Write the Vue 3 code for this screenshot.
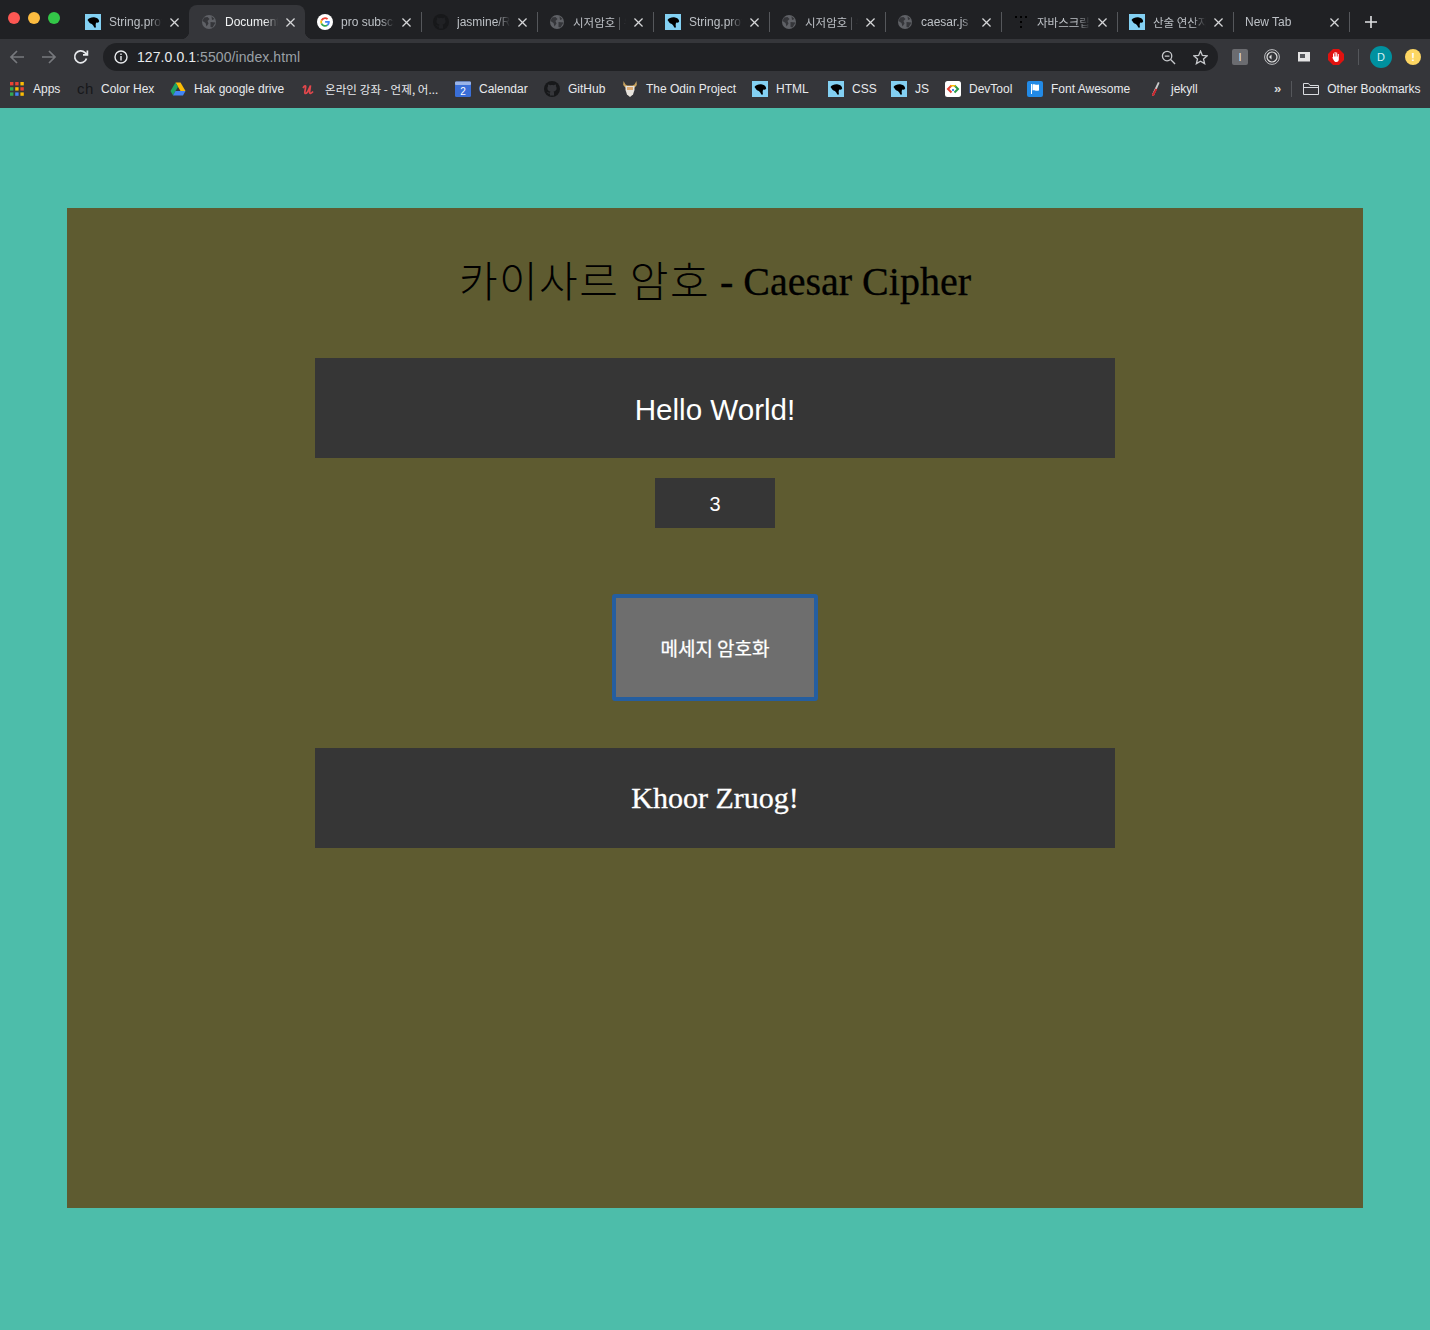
<script setup>
const tabs = [
  { title: 'String.prototype', icon: 'mdn', active: false },
  { title: 'Document', icon: 'globe', active: true },
  { title: 'pro subscription', icon: 'google', active: false },
  { title: 'jasmine/README', icon: 'github', active: false },
  { title: '시저암호 | 위키', icon: 'globe', active: false, ko: true },
  { title: 'String.prototype', icon: 'mdn', active: false },
  { title: '시저암호 | 위키', icon: 'globe', active: false, ko: true },
  { title: 'caesar.js', icon: 'globe', active: false },
  { title: '자바스크립트', icon: 'dots', active: false, ko: true },
  { title: '산술 연산자', icon: 'mdn', active: false, ko: true },
  { title: 'New Tab', icon: '', active: false },
]

const bookmarks = [
  { label: 'Apps', icon: 'apps', width: 68 },
  { label: 'Color Hex', icon: 'ch', width: 93 },
  { label: 'Hak google drive', icon: 'drive', width: 131 },
  { label: '온라인 강좌 - 언제, 어...', icon: 'udemy', width: 154, ko: true },
  { label: 'Calendar', icon: 'calendar', width: 89 },
  { label: 'GitHub', icon: 'github', width: 78 },
  { label: 'The Odin Project', icon: 'odin', width: 130 },
  { label: 'HTML', icon: 'mdn', width: 76 },
  { label: 'CSS', icon: 'mdn', width: 63 },
  { label: 'JS', icon: 'mdn', width: 54 },
  { label: 'DevTool', icon: 'dev', width: 82 },
  { label: 'Font Awesome', icon: 'fa', width: 120 },
  { label: 'jekyll', icon: 'jekyll', width: 90 },
]
</script>

<template>
  <div class="page">
    <svg class="defs" width="0" height="0">
      <symbol id="panther" viewBox="0 0 16 16">
        <rect width="16" height="16" fill="#83d0f2" />
        <path d="M2.5 6C4 4 7 3 10 3.5 12.5 3.8 14 5.5 14.2 7.5L13 8.8 11.5 8.5C10.5 9.5 10.5 11 11 13.5L9.2 13.5C8.5 11.5 7.5 10 5.5 9.5 4.5 9 4 8 3.5 7.2Z" fill="#000" />
      </symbol>
      <symbol id="globe" viewBox="0 0 16 16">
        <circle cx="8" cy="8" r="7" fill="#5f6166" />
        <path d="M3 3.5 6.5 3 8.5 5 6.5 7 7.5 9.5 5.5 12.5 4.5 9 1.5 7ZM10.5 2.2 13.5 5 11 6ZM9.5 8 14.5 8.5 11.5 13.5 9.5 13Z" fill="#35363a" />
      </symbol>
      <symbol id="octo" viewBox="0 0 16 16">
        <circle cx="8" cy="8" r="8" fill="#17181a" />
        <path d="M6 14.5V12.5C4 12.9 3.6 11.6 3.2 11 4.2 11 4.6 12 6 11.7 6 11 6.3 10.6 6.5 10.4 4.8 10.2 3.4 9.4 3.4 7.2 3.4 6.4 3.7 5.8 4.1 5.3 4 5 3.9 4.2 4.2 3.4 5 3.4 5.7 3.9 6.2 4.2 7.3 3.9 8.7 3.9 9.8 4.2 10.3 3.9 11 3.4 11.8 3.4 12.1 4.2 12 5 11.9 5.3 12.3 5.8 12.6 6.4 12.6 7.2 12.6 9.4 11.2 10.2 9.5 10.4 9.8 10.7 10 11.1 10 11.8V14.5Z" fill="currentColor" />
      </symbol>
    </svg>

    <header class="chrome">
      <div class="tabstrip">
        <div class="lights">
          <span class="light red"></span>
          <span class="light yellow"></span>
          <span class="light green"></span>
        </div>
        <div v-for="tab in tabs" :key="tab.title + tab.icon" class="tab" :class="{ active: tab.active }">
          <svg v-if="tab.icon === 'mdn'" class="favicon" viewBox="0 0 16 16"><use href="#panther" /></svg>
          <svg v-else-if="tab.icon === 'globe'" class="favicon" viewBox="0 0 16 16"><use href="#globe" /></svg>
          <svg v-else-if="tab.icon === 'github'" class="favicon" viewBox="0 0 16 16"><use href="#octo" /></svg>
          <svg v-else-if="tab.icon === 'google'" class="favicon" viewBox="0 0 16 16">
            <circle cx="8" cy="8" r="8" fill="#fff" />
            <path d="M8 3.2A4.8 4.8 0 0 1 11.2 4.4L9.9 5.7A3 3 0 0 0 5.2 7L3.7 5.9A4.8 4.8 0 0 1 8 3.2Z" fill="#ea4335" />
            <path d="M3.7 5.9 5.2 7A3 3 0 0 0 5.2 9L3.7 10.1A4.8 4.8 0 0 1 3.7 5.9Z" fill="#fbbc05" />
            <path d="M3.7 10.1 5.2 9A3 3 0 0 0 9.7 10.5L11.1 11.7A4.8 4.8 0 0 1 3.7 10.1Z" fill="#34a853" />
            <path d="M8.1 7.1H12.7C13 9 12.4 10.7 11.1 11.7L9.7 10.5C10.3 10.1 10.7 9.5 10.8 8.8H8.1Z" fill="#4285f4" />
          </svg>
          <svg v-else-if="tab.icon === 'dots'" class="favicon" viewBox="0 0 16 16">
            <g fill="#000"><rect x="2" y="2" width="2" height="2" /><rect x="7" y="2" width="2" height="2" /><rect x="12" y="2" width="2" height="2" /><rect x="7" y="7" width="2" height="2" /><rect x="7" y="12" width="2" height="2" /></g>
          </svg>
          <span class="tab-title" :class="{ ko: tab.ko }">{{ tab.title }}</span>
          <svg class="tab-close" viewBox="0 0 10 10"><path d="M.5 .5 9.5 9.5M9.5 .5 .5 9.5" /></svg>
        </div>
        <svg class="new-tab" viewBox="0 0 12 12"><path d="M6 0V12M0 6H12" /></svg>
      </div>

      <div class="toolbar">
        <svg class="nav dim" viewBox="0 0 16 16"><path d="M15 8H2M8 2 2 8 8 14" /></svg>
        <svg class="nav dim" viewBox="0 0 16 16"><path d="M1 8H14M8 2 14 8 8 14" /></svg>
        <svg class="nav" viewBox="0 0 16 16"><path d="M13.5 9.5A6 6 0 1 1 12 3.6L14 5.6M14.4 1.4V5.8H10" /></svg>
        <div class="omnibox">
          <svg class="info" viewBox="0 0 14 14">
            <circle cx="7" cy="7" r="6" />
            <path d="M7 6V10.5M7 3.4V5" />
          </svg>
          <span class="url"><span class="host">127.0.0.1</span>:5500/index.html</span>
          <svg class="omni-icon zoom" viewBox="0 0 16 16"><circle cx="6.5" cy="6.5" r="5" /><path d="M10.2 10.2 15 15M4 6.5H9" /></svg>
          <svg class="omni-icon" viewBox="0 0 16 16"><path d="M8 1.2 10 5.8 15 6.3 11.2 9.6 12.4 14.6 8 12 3.6 14.6 4.8 9.6 1 6.3 6 5.8Z" /></svg>
        </div>
        <div class="extensions">
          <span class="ext-box">I</span>
          <svg class="ext" viewBox="0 0 16 16"><circle cx="8" cy="8" r="7.4" fill="none" stroke="#bdbec1" /><circle cx="8" cy="8" r="5" fill="none" stroke="#e0e0e0" stroke-width="1.2" /><path d="M5 8 7.5 5.5V10.5Z" fill="#e0e0e0" /></svg>
          <svg class="ext" viewBox="0 0 16 16"><rect x="2" y="3" width="12" height="9" fill="#e4e4e4" /><rect x="4" y="5" width="5" height="4" fill="#55575b" /><rect x="2" y="12" width="12" height="1" fill="#8a8b8e" /></svg>
          <svg class="ext" viewBox="0 0 16 16">
            <path d="M5 0H11L16 5V11L11 16H5L0 11V5Z" fill="#e0120f" />
            <path d="M5 7V4.5H6V7.5H6.6V3H7.6V7.5H8.2V3.4H9.2V7.5H9.8V5H10.8V10.5C10.8 12.2 9.6 13 8.3 13 7 13 6.4 12.4 5.6 11L4.2 8.6 5 8.2Z" fill="#fff" />
          </svg>
          <span class="ext-sep"></span>
          <span class="avatar">D</span>
          <span class="alert">!</span>
        </div>
      </div>

      <nav class="bookmarks">
        <div v-for="mark in bookmarks" :key="mark.label" class="mark" :style="{ width: mark.width + 'px' }">
          <svg v-if="mark.icon === 'apps'" class="mark-icon" viewBox="0 0 16 16">
            <g>
              <rect x="1" y="1" width="3.4" height="3.4" fill="#ea4335" /><rect x="6.2" y="1" width="3.4" height="3.4" fill="#ea4335" /><rect x="11.4" y="1" width="3.4" height="3.4" fill="#fbbc05" />
              <rect x="1" y="6.2" width="3.4" height="3.4" fill="#34a853" /><rect x="6.2" y="6.2" width="3.4" height="3.4" fill="#fbbc05" /><rect x="11.4" y="6.2" width="3.4" height="3.4" fill="#ea4335" />
              <rect x="1" y="11.4" width="3.4" height="3.4" fill="#34a853" /><rect x="6.2" y="11.4" width="3.4" height="3.4" fill="#4285f4" /><rect x="11.4" y="11.4" width="3.4" height="3.4" fill="#fbbc05" />
            </g>
          </svg>
          <span v-else-if="mark.icon === 'ch'" class="mark-icon ch">ch</span>
          <svg v-else-if="mark.icon === 'drive'" class="mark-icon" viewBox="0 0 16 16">
            <path d="M5.5 1.5H10.5L15.5 10H10.5Z" fill="#fbbc05" />
            <path d="M5.5 1.5 8 5.8 3 14.5 .5 10Z" fill="#1fa463" />
            <path d="M5.5 10H15.5L13 14.5H3Z" fill="#4285f4" />
          </svg>
          <svg v-else-if="mark.icon === 'udemy'" class="mark-icon" viewBox="0 0 16 16">
            <path d="M2 7C3.5 4.5 5 4 4.6 6.5L3.8 11C3.6 13 5 13 6.5 11L9.5 4.5 8.6 11C8.5 13 10 13 12 10.5" fill="none" stroke="#e2474c" stroke-width="1.7" />
          </svg>
          <svg v-else-if="mark.icon === 'calendar'" class="mark-icon" viewBox="0 0 16 16">
            <rect y=".5" width="16" height="15.5" rx="1.5" fill="#3a6fd8" />
            <rect y=".5" width="16" height="3.5" rx="1" fill="#9ab4e8" />
            <text x="8" y="14" text-anchor="middle" class="cal-day">2</text>
          </svg>
          <svg v-else-if="mark.icon === 'github'" class="mark-icon" viewBox="0 0 16 16"><use href="#octo" /></svg>
          <svg v-else-if="mark.icon === 'odin'" class="mark-icon" viewBox="0 0 16 16">
            <path d="M1.5 0 3.5 3.5 5.5 4.5H10.5L12.5 3.5 14.5 0 14.8 4 12.8 6.5H3.2L1.2 4Z" fill="#c9a35e" />
            <path d="M3.5 5H12.5V9L11 13.5 8 16 5 13.5 3.5 9Z" fill="#e7e3dc" />
            <rect x="5" y="6" width="6" height="3" fill="#dda96f" />
          </svg>
          <svg v-else-if="mark.icon === 'mdn'" class="mark-icon" viewBox="0 0 16 16"><use href="#panther" /></svg>
          <svg v-else-if="mark.icon === 'dev'" class="mark-icon" viewBox="0 0 16 16">
            <rect width="16" height="16" rx="2.5" fill="#fff" />
            <path d="M6.5 4.5 3 8 6.5 11.5" fill="none" stroke="#e34133" stroke-width="2" />
            <path d="M9.5 4.5 13 8 9.5 11.5" fill="none" stroke="#2a9d4a" stroke-width="2" />
            <path d="M6 4H10L11 5.5H5Z" fill="#fbbc05" />
            <path d="M7 8H9V10H7Z" fill="#4285f4" />
          </svg>
          <svg v-else-if="mark.icon === 'fa'" class="mark-icon" viewBox="0 0 16 16">
            <rect width="16" height="16" rx="2" fill="#228ae6" />
            <path d="M4 3H5V13H4ZM5.5 3.5C7.5 2.8 8.5 4.5 12 3.5V9.5C8.5 10.5 7.5 8.8 5.5 9.5Z" fill="#fff" />
          </svg>
          <svg v-else-if="mark.icon === 'jekyll'" class="mark-icon" viewBox="0 0 16 16">
            <path d="M11 1 12.6 1.8 7 14.5C6.5 15.7 4.6 15 5 13.6Z" fill="#c9c9c9" />
            <path d="M8.6 7.5 10.2 8.2 7 14.5C6.5 15.7 4.6 15 5 13.6Z" fill="#c8242b" />
          </svg>
          <span class="mark-label" :class="{ ko: mark.ko }">{{ mark.label }}</span>
        </div>
        <span class="more">»</span>
        <span class="mark-sep"></span>
        <div class="mark other">
          <svg class="mark-icon folder" viewBox="0 0 16 16"><path d="M.5 13.5V2.5H5.5L7 4.5H15.5V13.5ZM.5 6.5H15.5" /></svg>
          <span class="mark-label">Other Bookmarks</span>
        </div>
      </nav>
    </header>

    <main class="content">
      <section class="card">
        <h1 class="title"><span class="title-ko">카이사르 암호</span> - Caesar Cipher</h1>
        <input class="message" type="text" value="Hello World!" />
        <input class="shift" type="text" value="3" />
        <button class="encrypt" type="button">메세지 암호화</button>
        <div class="result">Khoor Zruog!</div>
      </section>
    </main>
  </div>
</template>

<style>
html,
body {
  margin: 0;
  background: #4dbdaa;
}
</style>

<style scoped>
.page {
  width: 1430px;
  height: 1330px;
  overflow: hidden;
  background: #4dbdaa;
  font-family: "Liberation Sans", "Noto Sans CJK KR", sans-serif;
}

.defs {
  position: absolute;
}

.chrome {
  height: 108px;
  color: #e8eaed;
  font-size: 12px;
}

.tabstrip {
  display: flex;
  align-items: flex-end;
  height: 39px;
  background: #202124;
}

.lights {
  display: flex;
  gap: 8px;
  align-self: flex-start;
  width: 65px;
  padding: 12px 0 0 8px;
}

.light {
  width: 12px;
  height: 12px;
  border-radius: 50%;
}

.red { background: #fc5753; }
.yellow { background: #fdbc40; }
.green { background: #33c748; }

.tab {
  position: relative;
  display: flex;
  align-items: center;
  box-sizing: border-box;
  width: 116px;
  height: 34px;
  padding: 0 10.5px 0 12px;
  color: #bdc1c6;
}

.tab::after {
  content: "";
  position: absolute;
  right: -1px;
  top: 7px;
  width: 1px;
  height: 20px;
  background: #55575b;
}

.tab:nth-of-type(2)::after {
  display: none;
}

.tab.active {
  color: #f1f3f4;
  background: #35363a;
  border-radius: 8px 8px 0 0;
}

/* little flares where the active tab meets the toolbar */
.tab.active::before,
.tab.active::after {
  content: "";
  position: absolute;
  top: auto;
  bottom: 0;
  width: 8px;
  height: 8px;
}

.tab.active::before {
  left: -8px;
  background: radial-gradient(circle at 0 0, transparent 8px, #35363a 8.5px);
}

.tab.active::after {
  right: -8px;
  background: radial-gradient(circle at 100% 0, transparent 8px, #35363a 8.5px);
}

.favicon {
  flex: none;
  width: 16px;
  height: 16px;
  margin-right: 8px;
  color: #202124;
}

.tab-title {
  flex: 1;
  overflow: hidden;
  white-space: nowrap;
  -webkit-mask-image: linear-gradient(to right, #000 75%, transparent);
  mask-image: linear-gradient(to right, #000 75%, transparent);
}

.ko {
  font-family: "Noto Sans CJK KR", sans-serif;
  font-size: 11.5px;
  line-height: 16px;
}

.tab-close {
  flex: none;
  width: 9px;
  height: 9px;
  margin-left: 8px;
  fill: none;
  stroke: #d5d6d8;
  stroke-width: 1.4;
}

.new-tab {
  width: 12px;
  height: 12px;
  margin: 0 0 11px 16px;
  fill: none;
  stroke: #e0e1e3;
  stroke-width: 1.6;
}

.toolbar {
  display: flex;
  align-items: center;
  height: 36px;
  padding-left: 1px;
  background: #35363a;
}

.nav {
  flex: none;
  width: 16px;
  height: 16px;
  margin-left: 8px;
  margin-right: 8px;
  fill: none;
  stroke: #e8eaed;
  stroke-width: 1.7;
}

.nav.dim {
  stroke: #77797d;
}

.omnibox {
  display: flex;
  align-items: center;
  flex: none;
  box-sizing: border-box;
  width: 1115px;
  height: 28px;
  margin-left: 6px;
  padding: 0 10px 0 11px;
  background: #202124;
  border-radius: 14px;
}

.info {
  flex: none;
  width: 14px;
  height: 14px;
  margin-right: 9px;
  fill: none;
  stroke: #e8eaed;
  stroke-width: 1.4;
}

.url {
  flex: 1;
  font-size: 14px;
  letter-spacing: 0.08px;
  color: #9aa0a6;
}

.host {
  color: #e8eaed;
}

.omni-icon {
  flex: none;
  width: 15px;
  height: 15px;
  margin-left: 17px;
  fill: none;
  stroke: #c7c9cc;
  stroke-width: 1.4;
}

.extensions {
  display: flex;
  align-items: center;
  flex: 1;
  padding-left: 14px;
}

.ext-box {
  width: 16px;
  height: 16px;
  margin-right: 16px;
  font-size: 11px;
  line-height: 16px;
  text-align: center;
  color: #e8eaed;
  background: #6b6c70;
  border-radius: 2px;
}

.ext {
  width: 16px;
  height: 16px;
  margin-right: 16px;
}

.ext-sep {
  width: 1px;
  height: 16px;
  margin: 0 11px 0 -2px;
  background: #55575b;
}

.avatar {
  flex: none;
  width: 22px;
  height: 22px;
  margin-right: 13px;
  font-size: 11px;
  line-height: 22px;
  text-align: center;
  color: #d7f0f2;
  background: #00919f;
  border-radius: 50%;
}

.alert {
  flex: none;
  width: 16px;
  height: 16px;
  font-size: 11px;
  font-weight: 700;
  line-height: 16px;
  text-align: center;
  color: #fff;
  background: #fdd663;
  border-radius: 50%;
}

.bookmarks {
  display: flex;
  align-items: center;
  box-sizing: border-box;
  height: 33px;
  padding: 0 0 6px 9px;
  color: #35363a;
  background: #35363a;
}

.mark {
  display: flex;
  align-items: center;
  flex: none;
  white-space: nowrap;
}

.mark-icon {
  flex: none;
  width: 16px;
  height: 16px;
  margin-right: 8px;
}

.ch {
  font-size: 15px;
  line-height: 16px;
  letter-spacing: 0.5px;
  color: #17181a;
}

.cal-day {
  font-size: 10px;
  font-family: "Liberation Sans", sans-serif;
  fill: #fff;
}

.mark-label {
  color: #e8eaed;
}

.mark-label.ko {
  letter-spacing: 0.1px;
}

.more {
  margin-left: 37px;
  font-size: 13px;
  font-weight: 700;
  line-height: 16px;
  color: #d5d6d8;
}

.mark-sep {
  width: 1px;
  height: 16px;
  margin: 0 11px 0 10px;
  background: #55575b;
}

.folder {
  fill: none;
  stroke: #dadce0;
}

.content {
  padding: 100px 0 0 67px;
}

.card {
  display: flex;
  flex-direction: column;
  align-items: center;
  box-sizing: border-box;
  width: 1296px;
  height: 1000px;
  padding-top: 49px;
  background: #5e5b30;
}

.title {
  height: 50px;
  margin: 0 0 51px;
  font-family: "Liberation Serif", "Noto Sans CJK KR", serif;
  font-size: 40px;
  font-weight: 400;
  line-height: 50px;
  color: #000;
  -webkit-text-stroke: 0.3px #000;
}

.title-ko {
  font-family: "Noto Sans CJK KR", serif;
  font-size: 42px;
  font-weight: 300;
  line-height: 1;
  letter-spacing: 1.4px;
  vertical-align: -2px;
  -webkit-text-stroke: 0;
}

.message,
.shift {
  display: block;
  box-sizing: border-box;
  border: 0;
  outline: 0;
  text-align: center;
  color: #fff;
  background: #363636;
  font-family: "Liberation Sans", sans-serif;
}

.message {
  width: 800px;
  height: 100px;
  padding: 4px 0 0;
  font-size: 29.6px;
}

.shift {
  width: 120px;
  height: 50px;
  margin-top: 20px;
  padding: 2px 0 0;
  font-size: 20px;
}

.encrypt {
  box-sizing: border-box;
  width: 206px;
  height: 107px;
  margin-top: 66px;
  border: 4px solid #255e9f;
  border-radius: 3px;
  color: #fff;
  background: #6e6e6e;
  font-family: "Noto Sans CJK KR", sans-serif;
  font-size: 19px;
  font-weight: 400;
  -webkit-text-stroke: 0.25px #fff;
}

.result {
  box-sizing: border-box;
  width: 800px;
  height: 100px;
  margin-top: 47px;
  font-family: "Liberation Serif", serif;
  font-size: 30px;
  line-height: 100px;
  text-align: center;
  color: #fff;
  background: #363636;
  -webkit-text-stroke: 0.3px #fff;
}
</style>
